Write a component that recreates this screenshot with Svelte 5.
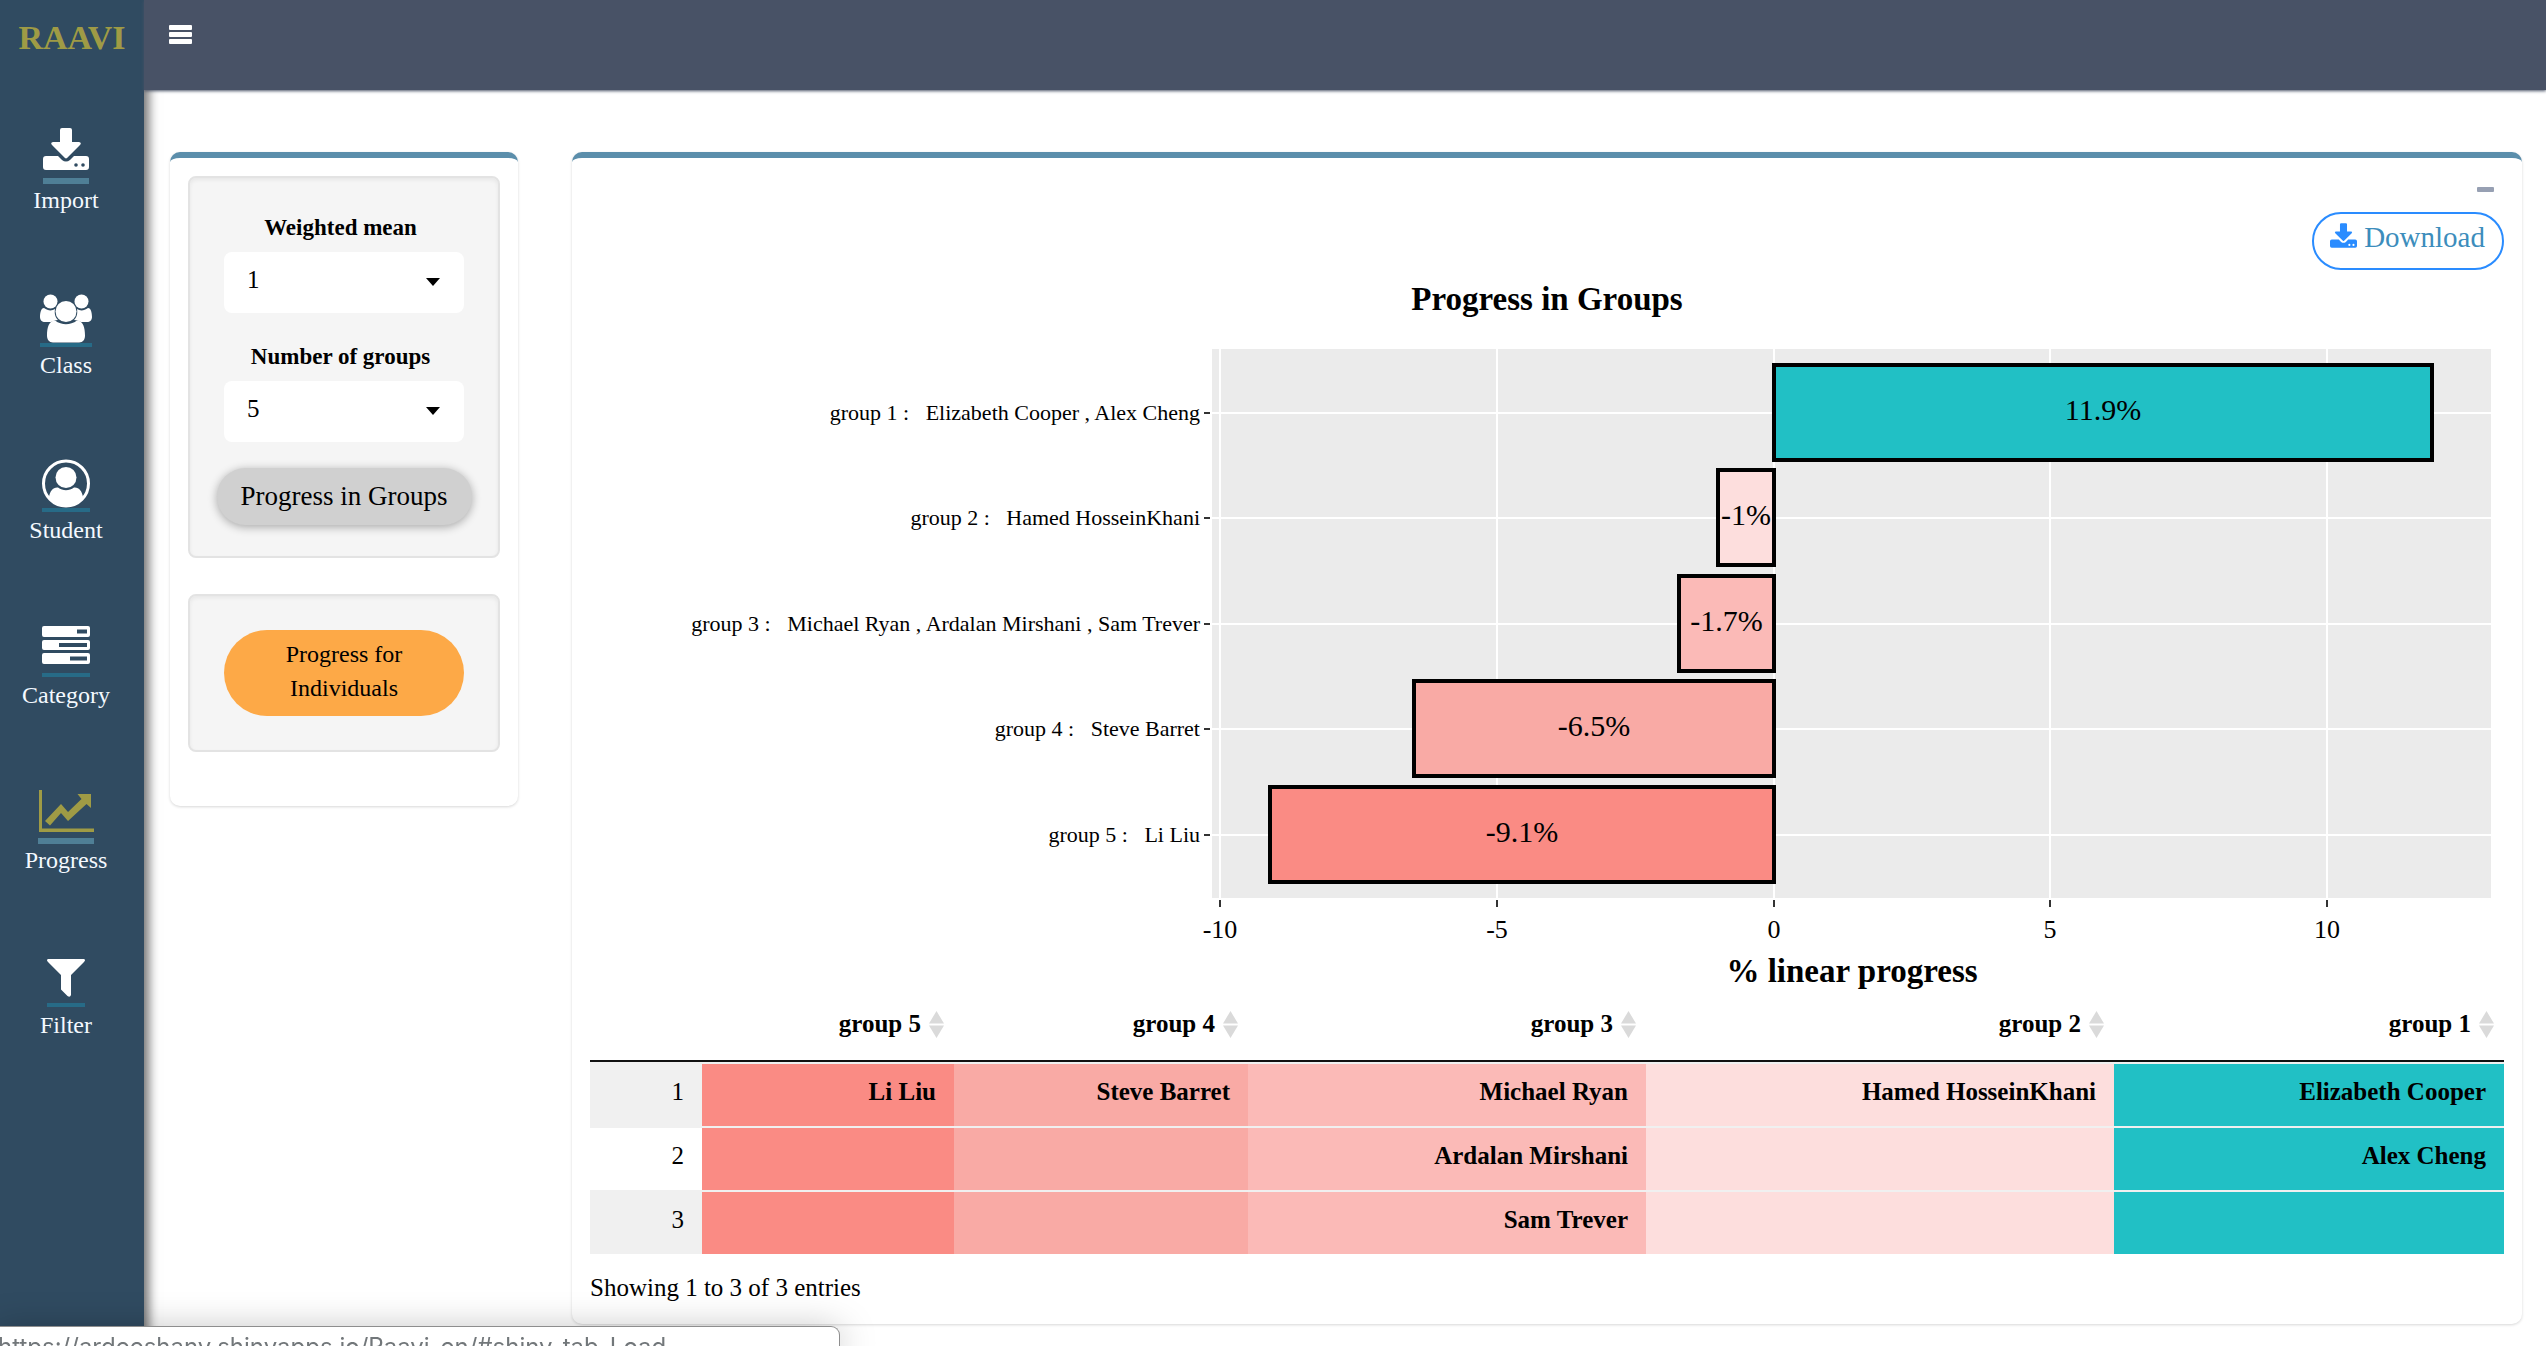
<script lang="ts">
  const navItems = [
    { id: 'import', label: 'Import', width: 46, strong: true, olive: false },
    { id: 'class', label: 'Class', width: 52, strong: false, olive: false },
    { id: 'student', label: 'Student', width: 48, strong: false, olive: false },
    { id: 'category', label: 'Category', width: 48, strong: false, olive: false },
    { id: 'progress', label: 'Progress', width: 56, strong: true, olive: true },
    { id: 'filter', label: 'Filter', width: 38, strong: false, olive: false }
  ];

  const groups = [
    { name: 'group 1', members: ['Elizabeth Cooper', 'Alex Cheng'], value: 11.9, color: '#21c0c5' },
    { name: 'group 2', members: ['Hamed HosseinKhani'], value: -1, color: '#fddedd' },
    { name: 'group 3', members: ['Michael Ryan', 'Ardalan Mirshani', 'Sam Trever'], value: -1.7, color: '#fbbab7' },
    { name: 'group 4', members: ['Steve Barret'], value: -6.5, color: '#f9aaa5' },
    { name: 'group 5', members: ['Li Liu'], value: -9.1, color: '#fa8b84' }
  ];

  const columns = [...groups].reverse();
  const columnWidths = [112, 252, 294, 398, 468, 390];
  const totalWidth = columnWidths.reduce((a, b) => a + b, 0);
  const rows = [0, 1, 2];

  // Plot area inside the chart's view box
  const plot = { left: 622, right: 1901, top: 79, bottom: 628 };
  const unit = 55.35;
  const zero = 1184;
  const step = 105.5;
  const barHeight = 95;
  const ticks = [-10, -5, 0, 5, 10];
  const xOf = (v: number) => Math.floor(zero + v * unit);
  const yOf = (i: number) => Math.round(142.5 + i * step);

  const nb = '\u00a0';
  const axisLabel = (g: { name: string; members: string[] }) =>
    `${g.name} :${nb}${nb}${nb}${g.members.join(' , ')}`;

  let weight = $state('1');
  let count = $state('5');
</script>

<div class="app">
  <aside class="sidebar">
    <a class="brand" href="#home">RAAVI</a>
    <nav>
      {#each navItems as item (item.id)}
        <a class="nav-item" href={'#' + item.id}>
          <svg class="nav-icon" class:olive={item.olive} width={item.width} height="50" viewBox="0 0 {item.width} 50" aria-hidden="true">
            {#if item.id === 'import'}
              <path d="M19 0h8q2 0 2 2v12h7q3 .5 1 3L24 30q-1 .8-2 0L9 17q-2-2.500 1-3h7V2q0-2 2-2z" />
              <path fill-rule="evenodd" d="M3 28h12l4 4q4 3 8 0l4-4h12q3 0 3 3v8q0 3-3 3H3q-3 0-3-3v-8q0-3 3-3zM33 35.200a1.800 1.800 0 1 0 0 3.600a1.800 1.800 0 1 0 0-3.600zM40 35.200a1.800 1.800 0 1 0 0 3.600a1.800 1.800 0 1 0 0-3.600z" />
            {:else if item.id === 'class'}
              <circle cx="10.500" cy="8.500" r="7" />
              <circle cx="41.500" cy="8.500" r="7" />
              <path d="M4 15c4 3 8 3 11 1c-1 6 1 9 3 11c-3 0-5 1-7 2H5c-3 0-5-2-5-5c0-4 1-9 4-9z" />
              <path d="M48 15c-4 3-8 3-11 1c1 6-1 9-3 11c3 0 5 1 7 2h6c3 0 5-2 5-5c0-4-1-9-4-9z" />
              <circle cx="26" cy="18.500" r="10.500" />
              <path d="M15 27.500c7 5 15 5 22 0c6 0 8 7 8 15c0 4-2 7-6 7H13c-4 0-6-3-6-7c0-8 2-15 8-15z" />
            {:else if item.id === 'student'}
              <ellipse cx="24" cy="25.500" rx="22.500" ry="22.500" fill="none" stroke="currentColor" stroke-width="3" />
              <circle cx="24" cy="19.500" r="10.500" />
              <path d="M7 39c1-6 4-10 9-9.500c5 3.500 11 3.500 16 0c5-.5 8 3.500 9 9.500c-9 12-25 12-34 0z" />
            {:else if item.id === 'category'}
              <path fill-rule="evenodd" d="M2 3h44q2 0 2 2v7q0 2-2 2H2q-2 0-2-2V5q0-2 2-2zM35 6.500v4h10v-4zM2 17h44q2 0 2 2v6q0 2-2 2H2q-2 0-2-2v-6q0-2 2-2zM17 20v4h28v-4zM2 30h44q2 0 2 2v7q0 2-2 2H2q-2 0-2-2v-7q0-2 2-2zM28 33.500v4h17v-4z" />
            {:else if item.id === 'progress'}
              <path d="M1 2h3v38.500h52v3.500H1z" />
              <path d="M7 33L23 16l7 8L43.500 11l-4-5H53v14l-4.500-4L30 33l-7-8L12 37.500z" />
            {:else}
              <path d="M1 6h36q2 1 0 3L24 22v20q-1 3-3.500 1L14 36.500V22L1 9q-2-2 0-3z" />
            {/if}
          </svg>
          <span class="nav-line"><span class="bar" class:strong={item.strong} style:width="{item.width}px"></span></span>
          <span class="nav-label">{item.label}</span>
        </a>
      {/each}
    </nav>
  </aside>

  <div class="content">
    <header class="topbar">
      <button class="menu" type="button" aria-label="Toggle navigation">
        <svg width="24" height="20" viewBox="0 0 24 20" aria-hidden="true">
          <rect y="0" width="23" height="5" rx="1" /><rect y="7" width="23" height="5" rx="1" /><rect y="14" width="23" height="5" rx="1" />
        </svg>
      </button>
    </header>

    <main>
      <section class="panel controls">
        <form class="well" onsubmit={(e) => e.preventDefault()}>
          <label for="weight">Weighted mean</label>
          <div class="select">
            <select id="weight" bind:value={weight}>
              {#each ['1', '2', '3'] as o}<option value={o}>{o}</option>{/each}
            </select>
            <svg width="14" height="8" viewBox="0 0 14 8" aria-hidden="true"><path d="M0 0h14L7 8z" /></svg>
          </div>
          <label for="count" class="second">Number of groups</label>
          <div class="select">
            <select id="count" bind:value={count}>
              {#each ['2', '3', '4', '5'] as o}<option value={o}>{o}</option>{/each}
            </select>
            <svg width="14" height="8" viewBox="0 0 14 8" aria-hidden="true"><path d="M0 0h14L7 8z" /></svg>
          </div>
          <button class="groups-button" type="submit">Progress in Groups</button>
        </form>
        <div class="well">
          <button class="individuals-button" type="button">Progress for Individuals</button>
        </div>
      </section>

      <section class="panel results">
        <div class="tools">
          <button class="collapse" type="button" aria-label="Collapse">
            <svg width="17" height="5" viewBox="0 0 17 5" aria-hidden="true"><rect width="17" height="5" rx="1" /></svg>
          </button>
        </div>
        <div class="actions">
          <a class="download" href="#download">
            <svg width="27" height="25" viewBox="0 0 46 42" aria-hidden="true">
              <path d="M19 0h8q2 0 2 2v12h7q3 .5 1 3L24 30q-1 .8-2 0L9 17q-2-2.500 1-3h7V2q0-2 2-2z" />
              <path fill-rule="evenodd" d="M3 28h12l4 4q4 3 8 0l4-4h12q3 0 3 3v8q0 3-3 3H3q-3 0-3-3v-8q0-3 3-3zM33 35.200a1.800 1.800 0 1 0 0 3.600a1.800 1.800 0 1 0 0-3.600zM40 35.200a1.800 1.800 0 1 0 0 3.600a1.800 1.800 0 1 0 0-3.600z" />
            </svg>
            <span>Download</span>
          </a>
        </div>

        <svg class="chart" viewBox="0 0 1914 728" role="img" aria-label="Progress in Groups">
          <text class="title" x="957" y="40" text-anchor="middle">Progress in Groups</text>
          <rect x={plot.left} y={plot.top} width={plot.right - plot.left} height={plot.bottom - plot.top} fill="#ebebeb" />
          {#each ticks as t}
            <line class="grid" x1={xOf(t)} x2={xOf(t)} y1={plot.top} y2={plot.bottom} />
            <line class="tick" x1={xOf(t)} x2={xOf(t)} y1={plot.bottom + 2} y2={plot.bottom + 9} />
            <text class="tick-label" x={xOf(t)} y="668" text-anchor="middle">{t}</text>
          {/each}
          {#each groups as g, i}
            <line class="grid" x1={plot.left} x2={plot.right} y1={yOf(i)} y2={yOf(i)} />
            <line class="tick" x1={plot.left - 8} x2={plot.left - 2} y1={yOf(i)} y2={yOf(i)} />
            <text class="group-label" x={plot.left - 12} y={yOf(i) + 7} text-anchor="end">{axisLabel(g)}</text>
          {/each}
          {#each groups as g, i}
            <rect
              class="value-bar"
              x={Math.min(zero, xOf(g.value))}
              y={yOf(i) - 48}
              width={Math.abs(xOf(g.value) - zero)}
              height={barHeight}
              fill={g.color}
            />
            <text class="value" x={(zero + xOf(g.value)) / 2} y={yOf(i) + 7} text-anchor="middle">{g.value}%</text>
          {/each}
          <text class="title" x="1262" y="712" text-anchor="middle">% linear progress</text>
        </svg>

        <table>
          <colgroup>
            {#each columnWidths as w}<col style:width="{(w / totalWidth) * 100}%" />{/each}
          </colgroup>
          <thead>
            <tr>
              <td></td>
              {#each columns as c}
                <th scope="col">
                  <button type="button">
                    {c.name}
                    <svg width="15" height="27" viewBox="0 0 15 27" aria-hidden="true"><path d="M7.500 0L15 12.500H0zM0 14.500h15L7.500 27z" /></svg>
                  </button>
                </th>
              {/each}
            </tr>
          </thead>
          <tbody>
            {#each rows as r}
              <tr>
                <td class="index">{r + 1}</td>
                {#each columns as c}
                  <td class="member" style:background-color={c.color}>{c.members[r] ?? ''}</td>
                {/each}
              </tr>
            {/each}
          </tbody>
        </table>
        <p class="info">Showing 1 to 3 of 3 entries</p>
      </section>
    </main>
  </div>

  <div class="status">https://ardeeshany.shinyapps.io/Raavi_en/#shiny-tab-Load</div>
</div>

<style>
  :global(body) {
    margin: 0;
    background: #fff;
  }
  .app {
    display: flex;
    min-height: 100vh;
    font-family: 'Liberation Serif', 'Times New Roman', serif;
    font-size: 25px;
    line-height: 36px;
    color: #000;
  }
  .app :global(*) {
    box-sizing: border-box;
  }
  button,
  select {
    font: inherit;
    color: inherit;
    border: 0;
    background: none;
    padding: 0;
    margin: 0;
    cursor: pointer;
  }
  a {
    text-decoration: none;
  }

  .sidebar {
    flex: 0 0 144px;
    background: #304b61;
    box-shadow: 3px 5px 10px 2px rgba(0, 0, 0, 0.55);
    position: relative;
    z-index: 1;
  }
  .brand {
    display: block;
    height: 128px;
    padding-top: 20px;
    text-align: center;
    font-size: 34px;
    font-weight: bold;
    color: #9f9b45;
  }
  nav {
    display: flex;
    flex-direction: column;
    gap: 77px;
    padding-right: 12px;
  }
  .nav-item {
    display: flex;
    flex-direction: column;
    align-items: center;
    color: #fff;
  }
  .nav-icon {
    display: block;
    fill: currentColor;
  }
  .nav-icon.olive {
    color: #9f9b45;
  }
  .nav-line {
    display: block;
    height: 6px;
  }
  .bar {
    display: block;
    height: 4px;
    background: #276b87;
  }
  .bar.strong {
    height: 6px;
    background: #4f7f96;
  }
  .nav-label {
    font-size: 24px;
    line-height: 32px;
    color: #f4f9ff;
  }

  .content {
    flex: 1;
    min-width: 0;
  }
  .topbar {
    height: 90px;
    background: #485266;
    box-shadow: 0 1px 3px #485266;
    padding: 25px 25px 0;
    position: relative;
    z-index: 2;
  }
  .menu {
    display: block;
  }
  .menu svg {
    display: block;
    fill: #fff;
  }

  main {
    display: grid;
    grid-template-columns: 348px minmax(0, 1fr);
    gap: 54px;
    align-items: start;
    padding: 62px 24px 22px 26px;
  }
  .panel {
    border-top: 6px solid #5b8eab;
    border-radius: 10px;
    background: #fff;
    box-shadow: 0 1px 3px rgba(0, 0, 0, 0.16);
    padding: 18px;
  }
  .controls {
    display: flex;
    flex-direction: column;
    gap: 36px;
    padding-bottom: 54px;
  }
  .well {
    display: flex;
    flex-direction: column;
    background: #f5f5f5;
    border: 2px solid #e3e3e3;
    border-radius: 8px;
    box-shadow: inset 0 2px 4px rgba(0, 0, 0, 0.06);
    padding: 34px;
  }
  label {
    font-size: 23px;
    font-weight: bold;
    line-height: 32px;
    text-align: center;
    padding-right: 7px;
    margin-bottom: 8px;
  }
  label.second {
    margin-top: 28px;
  }
  .select {
    display: grid;
    align-items: center;
  }
  .select > :global(*) {
    grid-area: 1 / 1;
  }
  .select select {
    appearance: none;
    width: 100%;
    height: 61px;
    background: #fff;
    border-radius: 8px;
    padding: 0 40px 5px 23px;
  }
  .select svg {
    justify-self: end;
    margin: 0 24px 2px 0;
    pointer-events: none;
  }
  .groups-button {
    align-self: center;
    margin: 26px -8px -3px;
    padding: 10px 24px 11px;
    border-radius: 29px;
    background: #d0d0d0;
    box-shadow: 0 2px 10px rgba(0, 0, 0, 0.32);
    font-size: 27px;
    white-space: nowrap;
  }
  .individuals-button {
    border-radius: 43px;
    background: #fda947;
    padding: 7px 40px 11px;
    font-size: 24px;
    line-height: 34px;
  }

  .tools {
    display: flex;
    justify-content: flex-end;
    height: 36px;
    padding: 11px 10px 0;
  }
  .collapse {
    height: 5px;
  }
  .collapse svg {
    display: block;
    fill: #97a0b3;
  }
  .actions {
    display: flex;
    justify-content: flex-end;
  }
  .download {
    display: flex;
    align-items: center;
    gap: 7px;
    height: 58px;
    padding: 0 17px 8px 16px;
    border: 2px solid #2a8cff;
    border-radius: 29px;
    font-size: 29px;
    color: #3c8dbc;
  }
  .download svg {
    fill: #2a8cff;
    margin-bottom: 4px;
  }

  .chart {
    display: block;
    width: 100%;
    height: auto;
  }
  .title {
    font-size: 33px;
    font-weight: bold;
  }
  .tick-label {
    font-size: 26px;
  }
  .group-label {
    font-size: 22px;
  }
  .value {
    font-size: 30px;
  }
  .grid {
    stroke: #fff;
    stroke-width: 2;
  }
  .tick {
    stroke: #333;
    stroke-width: 2;
  }
  .value-bar {
    stroke: #000;
    stroke-width: 4;
  }

  table {
    width: 100%;
    table-layout: fixed;
    border-collapse: separate;
    border-spacing: 0;
  }
  thead th,
  thead td {
    height: 64px;
    padding: 8px 10px 18px;
    border-bottom: 2px solid #111;
    text-align: right;
  }
  th button {
    display: inline-flex;
    align-items: center;
    gap: 8px;
    font-weight: bold;
  }
  th svg {
    fill: #dadada;
  }
  tbody td {
    height: 64px;
    padding: 10px 18px 16px;
    border-top: 2px solid #f0f0f0;
    background-clip: padding-box;
    text-align: right;
    white-space: nowrap;
  }
  .index {
    background-color: #fff;
  }
  tr:nth-child(odd) .index {
    background-color: #f0f0f0;
  }
  .member {
    font-weight: bold;
  }
  .info {
    margin: 16px 0 0;
  }

  .status {
    position: fixed;
    left: -4px;
    bottom: 0;
    z-index: 3;
    width: 844px;
    height: 20px;
    padding: 4px 0 0 1px;
    overflow: hidden;
    border: 1px solid #8e8e8e;
    border-bottom: 0;
    border-radius: 0 9px 0 0;
    background: #fff;
    box-shadow: 0 6px 36px rgba(0, 0, 0, 0.35);
    font-family: Inter, 'Liberation Sans', sans-serif;
    font-size: 24px;
    line-height: 32px;
    color: #72777a;
    white-space: nowrap;
  }
</style>
